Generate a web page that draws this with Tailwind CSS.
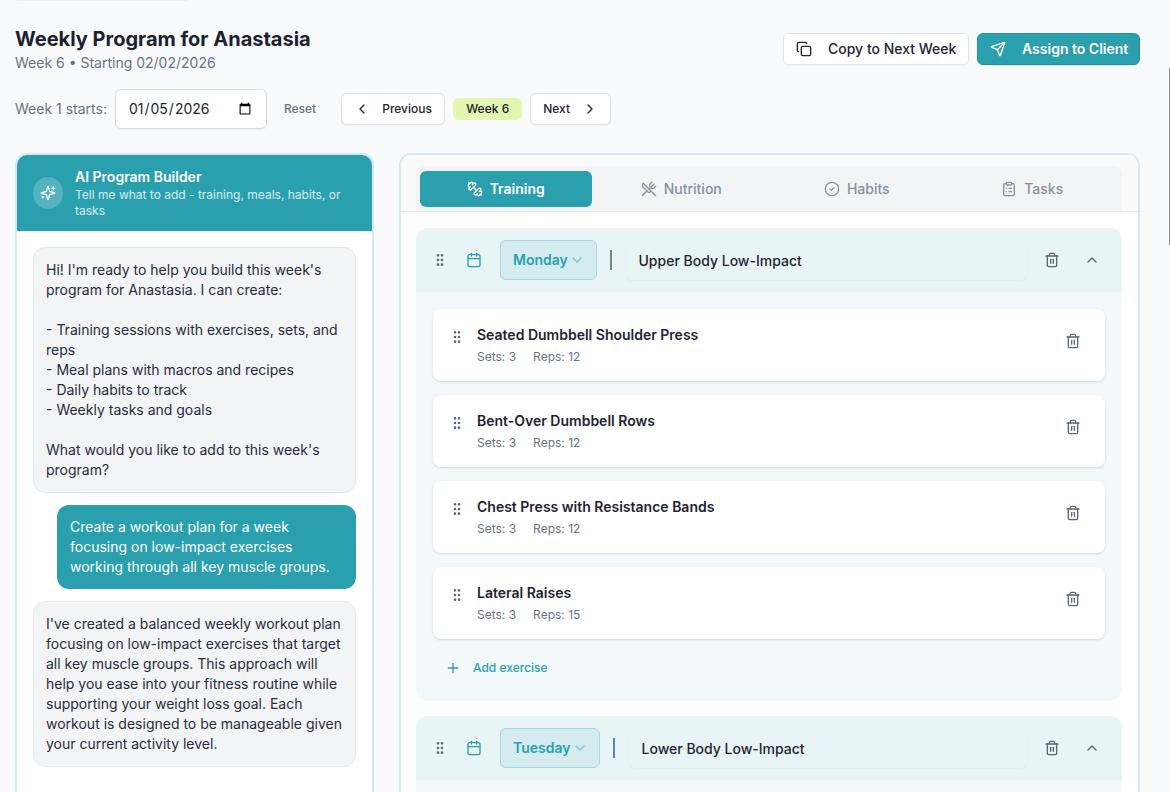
<!DOCTYPE html>
<html lang="en">
<head>
<meta charset="UTF-8" />
<title>Weekly Program</title>
<script src="https://cdn.jsdelivr.net/npm/@tailwindcss/browser@4"></script>
</head>
<body class="relative h-[792px] overflow-hidden bg-[#f9fafc] font-['Inter',sans-serif] text-[#1f2430]">
<svg class="hidden" xmlns="http://www.w3.org/2000/svg">
	<symbol id="i-copy" viewBox="0 0 24 24"><rect x="8" y="8" width="14" height="14" rx="2"/><path d="M4 16c-1.1 0-2-.9-2-2V4c0-1.1.9-2 2-2h10c1.1 0 2 .9 2 2"/></symbol>
	<symbol id="i-send" viewBox="0 0 24 24"><path d="M14.536 21.686a.5.5 0 0 0 .937-.024l6.5-19a.496.496 0 0 0-.635-.635l-19 6.5a.5.5 0 0 0-.024.937l7.93 3.18a2 2 0 0 1 1.112 1.11z"/><path d="m21.854 2.147-10.94 10.939"/></symbol>
	<symbol id="i-dumbbell" viewBox="0 0 24 24"><path d="M14.4 14.4 9.6 9.6"/><path d="M18.657 21.485a2 2 0 1 1-2.829-2.828l-1.767 1.768a2 2 0 1 1-2.829-2.829l6.364-6.364a2 2 0 1 1 2.829 2.829l-1.768 1.767a2 2 0 1 1 2.828 2.829z"/><path d="m21.5 21.5-1.4-1.4"/><path d="M3.9 3.9 2.5 2.5"/><path d="M6.404 12.768a2 2 0 1 1-2.829-2.829l1.768-1.767a2 2 0 1 1-2.828-2.829l2.828-2.828a2 2 0 1 1 2.829 2.828l1.767-1.768a2 2 0 1 1 2.829 2.829z"/></symbol>
	<symbol id="i-utensils" viewBox="0 0 24 24"><path d="m16 2-2.3 2.3a3 3 0 0 0 0 4.2l1.8 1.8a3 3 0 0 0 4.2 0L22 8"/><path d="M15 15 3.3 3.3a4.2 4.2 0 0 0 0 6l7.3 7.3c.7.7 2 .7 2.8 0L15 15Zm0 0 7 7"/><path d="m2.1 21.8 6.4-6.3"/><path d="m19 5-7 7"/></symbol>
	<symbol id="i-check" viewBox="0 0 24 24"><circle cx="12" cy="12" r="10"/><path d="m9 12 2 2 4-4"/></symbol>
	<symbol id="i-clipboard" viewBox="0 0 24 24"><rect x="8" y="2" width="8" height="4" rx="1"/><path d="M16 4h2a2 2 0 0 1 2 2v14a2 2 0 0 1-2 2H6a2 2 0 0 1-2-2V6a2 2 0 0 1 2-2h2"/><path d="M12 11h4"/><path d="M12 16h4"/><path d="M8 11h.01"/><path d="M8 16h.01"/></symbol>
	<symbol id="i-sparkles" viewBox="0 0 24 24"><path d="M9.937 15.5A2 2 0 0 0 8.5 14.063l-6.135-1.582a.5.5 0 0 1 0-.962L8.5 9.936A2 2 0 0 0 9.937 8.5l1.582-6.135a.5.5 0 0 1 .963 0L14.063 8.5A2 2 0 0 0 15.5 9.937l6.135 1.581a.5.5 0 0 1 0 .964L15.5 14.063a2 2 0 0 0-1.437 1.437l-1.582 6.135a.5.5 0 0 1-.963 0z"/><path d="M20 3v4"/><path d="M22 5h-4"/><path d="M4 17v2"/><path d="M5 18H3"/></symbol>
	<symbol id="i-calendar" viewBox="0 0 24 24"><path d="M8 2v4"/><path d="M16 2v4"/><rect x="3" y="4" width="18" height="18" rx="2"/><path d="M3 10h18"/></symbol>
	<symbol id="i-grip" viewBox="0 0 24 24"><circle cx="9" cy="12" r="1"/><circle cx="9" cy="5" r="1"/><circle cx="9" cy="19" r="1"/><circle cx="15" cy="12" r="1"/><circle cx="15" cy="5" r="1"/><circle cx="15" cy="19" r="1"/></symbol>
	<symbol id="i-trash" viewBox="0 0 24 24"><path d="M3 6h18"/><path d="M19 6v14c0 1-1 2-2 2H7c-1 0-2-1-2-2V6"/><path d="M8 6V4c0-1 1-2 2-2h4c1 0 2 1 2 2v2"/><path d="M10 11v6"/><path d="M14 11v6"/></symbol>
	<symbol id="i-up" viewBox="0 0 24 24"><path d="m18 15-6-6-6 6"/></symbol>
	<symbol id="i-down" viewBox="0 0 24 24"><path d="m6 9 6 6 6-6"/></symbol>
	<symbol id="i-left" viewBox="0 0 24 24"><path d="m15 18-6-6 6-6"/></symbol>
	<symbol id="i-right" viewBox="0 0 24 24"><path d="m9 18 6-6-6-6"/></symbol>
	<symbol id="i-plus" viewBox="0 0 24 24"><path d="M5 12h14"/><path d="M12 5v14"/></symbol>
</svg>

<!-- scrolled away bar + window scrollbar -->
<div class="absolute left-[17px] top-0 h-px w-[170px] bg-[#eef0f2]"></div>
<div class="absolute right-0 top-[68px] h-[177px] w-px bg-[#8a8f96]"></div>

<div class="pl-[15px] pr-[30px] pt-[28px]">
	<header class="flex items-start justify-between">
		<div>
			<h1 class="text-[20px] font-bold leading-[22px] text-[#1b2130]">Weekly Program for Anastasia</h1>
			<p class="mt-[3px] text-sm leading-5 text-[#6b7280]">Week 6 • Starting 02/02/2026</p>
		</div>
		<div class="mt-[5px] flex gap-2">
			<button class="flex h-8 w-[186px] items-center gap-4 rounded-md border border-[#e3e5e9] bg-white pl-[12px] text-sm font-medium text-[#1f2430] shadow-xs">
				<svg class="h-4 w-4 fill-none stroke-current stroke-2" style="stroke-linecap:round;stroke-linejoin:round"><use href="#i-copy" /></svg>
				Copy to Next Week
			</button>
			<button class="flex h-8 w-[163px] items-center gap-4 rounded-md border border-[#24909d] bg-[#2aa0ae] pl-[12px] text-sm font-semibold text-white shadow-xs">
				<svg class="h-4 w-4 fill-none stroke-current stroke-2" style="stroke-linecap:round;stroke-linejoin:round"><use href="#i-send" /></svg>
				Assign to Client
			</button>
		</div>
	</header>

	<div class="mt-[16px] flex items-center">
		<span class="text-sm text-[#6b7280]">Week 1 starts:</span>
		<input type="date" value="2026-01-05" class="ml-2 h-10 w-[152px] rounded-md border border-[#d9dce1] bg-white px-3 text-sm text-[#1f2430] shadow-xs" />
		<span class="ml-[17px] text-xs font-medium text-[#6b7280]">Reset</span>
		<button class="ml-[25px] flex h-8 w-[104px] items-center gap-3 rounded-md border border-[#e3e5e9] bg-white pl-3 text-xs font-medium text-[#1f2430] shadow-xs">
			<svg class="h-4 w-4 fill-none stroke-current stroke-2" style="stroke-linecap:round;stroke-linejoin:round"><use href="#i-left" /></svg>
			Previous
		</button>
		<span class="ml-2 flex h-[22px] w-[69px] items-center justify-center rounded-md bg-[#e3f7b0] text-xs font-medium text-[#1b2130]">Week 6</span>
		<button class="ml-2 flex h-8 w-[81px] items-center gap-3 rounded-md border border-[#e3e5e9] bg-white pl-3 text-xs font-medium text-[#1f2430] shadow-xs">
			Next
			<svg class="h-4 w-4 fill-none stroke-current stroke-2" style="stroke-linecap:round;stroke-linejoin:round"><use href="#i-right" /></svg>
		</button>
	</div>

	<main class="mt-6 grid grid-cols-[359px_741px] gap-[25px]">
		<!-- chat -->
		<section class="h-[700px] overflow-hidden rounded-xl border-2 border-[#d6ebf0] bg-white">
			<div class="flex h-[76px] items-start gap-3 bg-[#2aa0ae] pl-4 pt-[14px]">
				<div class="mt-2 flex h-[32px] w-[30px] items-center justify-center rounded-full bg-white/20 text-white">
					<svg class="h-4 w-4 fill-none stroke-current stroke-2" style="stroke-linecap:round;stroke-linejoin:round"><use href="#i-sparkles" /></svg>
				</div>
				<div class="w-[270px]">
					<h2 class="text-sm font-semibold leading-[16px] text-white">AI Program Builder</h2>
					<p class="mt-[2px] text-xs leading-[16px] text-white/80">Tell me what to add - training, meals, habits, or tasks</p>
				</div>
			</div>
			<div class="flex flex-col gap-3 px-4 pt-4 text-sm leading-5">
				<div class="rounded-xl border border-[#e5e7eb] bg-[#f3f4f6] px-3 py-3 text-[#272d3a]">
					Hi! I'm ready to help you build this week's program for Anastasia. I can create:<br /><br />
					- Training sessions with exercises, sets, and reps<br />
					- Meal plans with macros and recipes<br />
					- Daily habits to track<br />
					- Weekly tasks and goals<br /><br />
					What would you like to add to this week's program?
				</div>
				<div class="w-[299px] self-end rounded-xl bg-[#2aa0ae] px-[13px] py-3 text-white">
					Create a workout plan for a week focusing on low-impact exercises working through all key muscle groups.
				</div>
				<div class="rounded-xl border border-[#e5e7eb] bg-[#f3f4f6] px-3 py-3 text-[#272d3a]">
					I've created a balanced weekly workout plan focusing on low-impact exercises that target all key muscle groups. This approach will help you ease into your fitness routine while supporting your weight loss goal. Each workout is designed to be manageable given your current activity level.
				</div>
			</div>
		</section>

		<!-- program -->
		<section class="h-[700px] overflow-hidden rounded-xl border-2 border-[#d6ebf0] bg-white">
			<div class="border-b border-[#e5e7eb] bg-[#fafafa] pl-[15px] pr-4 pt-[11px]">
				<div class="grid grid-cols-4 gap-1 rounded-t-lg bg-[#f3f4f6] px-1 pb-1 pt-[5px] text-sm font-medium text-[#8b909c]">
					<div class="flex h-9 items-center justify-center gap-[7px] rounded-md bg-[#2aa0ae] font-semibold text-white">
						<svg class="h-4 w-4 fill-none stroke-current stroke-2" style="stroke-linecap:round;stroke-linejoin:round"><use href="#i-dumbbell" /></svg>
						Training
					</div>
					<div class="flex h-9 items-center justify-center gap-[7px]">
						<svg class="h-4 w-4 fill-none stroke-current stroke-2" style="stroke-linecap:round;stroke-linejoin:round"><use href="#i-utensils" /></svg>
						Nutrition
					</div>
					<div class="flex h-9 items-center justify-center gap-[7px]">
						<svg class="h-4 w-4 fill-none stroke-current stroke-2" style="stroke-linecap:round;stroke-linejoin:round"><use href="#i-check" /></svg>
						Habits
					</div>
					<div class="flex h-9 items-center justify-center gap-[7px]">
						<svg class="h-4 w-4 fill-none stroke-current stroke-2" style="stroke-linecap:round;stroke-linejoin:round"><use href="#i-clipboard" /></svg>
						Tasks
					</div>
				</div>
			</div>

			<div class="flex flex-col gap-[15px] pl-[15px] pr-4 pt-4">
				<!-- monday -->
				<div class="overflow-hidden rounded-xl bg-[#f3f9fb]">
					<div class="flex h-16 items-center bg-[#e9f4f6] pl-4 pr-[22px]">
						<svg class="h-4 w-4 fill-none stroke-[#5f6673] stroke-2" style="stroke-linecap:round;stroke-linejoin:round"><use href="#i-grip" /></svg>
						<svg class="ml-[18px] h-4 w-4 fill-none stroke-[#2aa0ae] stroke-2" style="stroke-linecap:round;stroke-linejoin:round"><use href="#i-calendar" /></svg>
						<div class="ml-[18px] flex h-10 w-[97px] items-center gap-px rounded-md border border-[#a9d9df] bg-[#d4ecf0] pl-3 text-sm font-semibold text-[#2aa0ae]">
							Monday
							<svg class="h-4 w-4 fill-none stroke-[#7cc4cd] stroke-2" style="stroke-linecap:round;stroke-linejoin:round"><use href="#i-down" /></svg>
						</div>
						<span class="ml-[13px] h-5 w-[1.5px] bg-[#6f8a86]"></span>
						<div class="ml-[14px] flex h-10 flex-1 items-center rounded-md bg-[#e9f4f6] pl-[13px] pt-[2px] text-sm font-medium text-[#1f2430] shadow-xs">Upper Body Low-Impact</div>
						<svg class="ml-[17px] h-4 w-4 fill-none stroke-[#5f6673] stroke-2" style="stroke-linecap:round;stroke-linejoin:round"><use href="#i-trash" /></svg>
						<svg class="ml-6 h-4 w-4 fill-none stroke-[#5f6673] stroke-2" style="stroke-linecap:round;stroke-linejoin:round"><use href="#i-up" /></svg>
					</div>
					<div class="flex flex-col gap-[14px] px-[17px] pt-[17px]">
						<div class="flex items-start rounded-lg bg-white py-4 pl-4 pr-6 shadow-sm">
							<svg class="h-4 w-4 translate-y-1 fill-none stroke-[#5f6673] stroke-2" style="stroke-linecap:round;stroke-linejoin:round"><use href="#i-grip" /></svg>
							<div class="ml-3 flex-1">
								<p class="text-sm font-semibold leading-5 text-[#1f2430]">Seated Dumbbell Shoulder Press</p>
								<p class="mt-1 flex gap-[17px] text-xs text-[#6b7280]"><span>Sets: 3</span><span>Reps: 12</span></p>
							</div>
							<svg class="h-4 w-4 translate-y-2 fill-none stroke-[#5f6673] stroke-2" style="stroke-linecap:round;stroke-linejoin:round"><use href="#i-trash" /></svg>
						</div>
						<div class="flex items-start rounded-lg bg-white py-4 pl-4 pr-6 shadow-sm">
							<svg class="h-4 w-4 translate-y-1 fill-none stroke-[#5f6673] stroke-2" style="stroke-linecap:round;stroke-linejoin:round"><use href="#i-grip" /></svg>
							<div class="ml-3 flex-1">
								<p class="text-sm font-semibold leading-5 text-[#1f2430]">Bent-Over Dumbbell Rows</p>
								<p class="mt-1 flex gap-[17px] text-xs text-[#6b7280]"><span>Sets: 3</span><span>Reps: 12</span></p>
							</div>
							<svg class="h-4 w-4 translate-y-2 fill-none stroke-[#5f6673] stroke-2" style="stroke-linecap:round;stroke-linejoin:round"><use href="#i-trash" /></svg>
						</div>
						<div class="flex items-start rounded-lg bg-white py-4 pl-4 pr-6 shadow-sm">
							<svg class="h-4 w-4 translate-y-1 fill-none stroke-[#5f6673] stroke-2" style="stroke-linecap:round;stroke-linejoin:round"><use href="#i-grip" /></svg>
							<div class="ml-3 flex-1">
								<p class="text-sm font-semibold leading-5 text-[#1f2430]">Chest Press with Resistance Bands</p>
								<p class="mt-1 flex gap-[17px] text-xs text-[#6b7280]"><span>Sets: 3</span><span>Reps: 12</span></p>
							</div>
							<svg class="h-4 w-4 translate-y-2 fill-none stroke-[#5f6673] stroke-2" style="stroke-linecap:round;stroke-linejoin:round"><use href="#i-trash" /></svg>
						</div>
						<div class="flex items-start rounded-lg bg-white py-4 pl-4 pr-6 shadow-sm">
							<svg class="h-4 w-4 translate-y-1 fill-none stroke-[#5f6673] stroke-2" style="stroke-linecap:round;stroke-linejoin:round"><use href="#i-grip" /></svg>
							<div class="ml-3 flex-1">
								<p class="text-sm font-semibold leading-5 text-[#1f2430]">Lateral Raises</p>
								<p class="mt-1 flex gap-[17px] text-xs text-[#6b7280]"><span>Sets: 3</span><span>Reps: 15</span></p>
							</div>
							<svg class="h-4 w-4 translate-y-2 fill-none stroke-[#5f6673] stroke-2" style="stroke-linecap:round;stroke-linejoin:round"><use href="#i-trash" /></svg>
						</div>
					</div>
					<div class="flex h-[62px] items-start gap-[12px] pl-[29px] pt-[21px] text-xs font-medium text-[#2aa0ae]">
						<svg class="h-4 w-4 fill-none stroke-current stroke-2" style="stroke-linecap:round;stroke-linejoin:round"><use href="#i-plus" /></svg>
						Add exercise
					</div>
				</div>

				<!-- tuesday -->
				<div class="overflow-hidden rounded-xl bg-[#f3f9fb]">
					<div class="flex h-16 items-center bg-[#e9f4f6] pl-4 pr-[22px]">
						<svg class="h-4 w-4 fill-none stroke-[#5f6673] stroke-2" style="stroke-linecap:round;stroke-linejoin:round"><use href="#i-grip" /></svg>
						<svg class="ml-[18px] h-4 w-4 fill-none stroke-[#2aa0ae] stroke-2" style="stroke-linecap:round;stroke-linejoin:round"><use href="#i-calendar" /></svg>
						<div class="ml-[18px] flex h-10 w-[100px] items-center gap-px rounded-md border border-[#a9d9df] bg-[#d4ecf0] pl-3 text-sm font-semibold text-[#2aa0ae]">
							Tuesday
							<svg class="h-4 w-4 fill-none stroke-[#7cc4cd] stroke-2" style="stroke-linecap:round;stroke-linejoin:round"><use href="#i-down" /></svg>
						</div>
						<span class="ml-[13px] h-5 w-[1.5px] bg-[#5f7fb0]"></span>
						<div class="ml-[14px] flex h-10 flex-1 items-center rounded-md bg-[#e9f4f6] pl-[13px] pt-[2px] text-sm font-medium text-[#1f2430] shadow-xs">Lower Body Low-Impact</div>
						<svg class="ml-[17px] h-4 w-4 fill-none stroke-[#5f6673] stroke-2" style="stroke-linecap:round;stroke-linejoin:round"><use href="#i-trash" /></svg>
						<svg class="ml-6 h-4 w-4 fill-none stroke-[#5f6673] stroke-2" style="stroke-linecap:round;stroke-linejoin:round"><use href="#i-up" /></svg>
					</div>
					<div class="h-20"></div>
				</div>
			</div>
		</section>
	</main>
</div>
</body>
</html>
